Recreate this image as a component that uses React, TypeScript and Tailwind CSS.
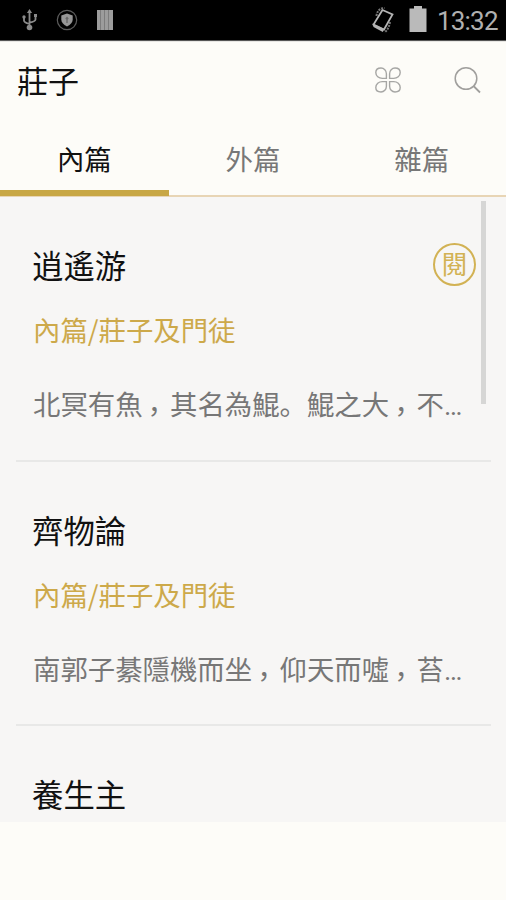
import React from 'react';

interface Chapter {
  title: string;
  source?: string;
  excerpt?: string;
  reading?: boolean;
}

const tabs = ['內篇', '外篇', '雜篇'];

const chapters: Chapter[] = [
  { title: '逍遙游', source: '內篇/莊子及門徒', excerpt: '北冥有魚，其名為鯤。鯤之大，不…', reading: true },
  { title: '齊物論', source: '內篇/莊子及門徒', excerpt: '南郭子綦隱機而坐，仰天而噓，苔…' },
  { title: '養生主' },
];

const StatusBar: React.FC = () => (
  <div className="h-[41px] bg-black border-b border-[#555] flex items-center justify-between pl-[22px] pr-2 shrink-0">
    <div className="flex items-center">
      {/* USB */}
      <svg className="w-4 h-[22px]" viewBox="0 0 16 22" fill="none" stroke="#8a8a8a" strokeWidth="1.8">
        <path d="M7.5 3v14M2 8.5v3q0 2 5.5 3.5M13.5 7v3.5q0 2-6 3" />
        <path d="M7.5 0l2.6 4H4.9z" fill="#8a8a8a" stroke="none" />
        <circle cx="7.5" cy="18.5" r="2.8" fill="#8a8a8a" stroke="none" />
        <circle cx="2" cy="8" r="1.7" fill="#8a8a8a" stroke="none" />
        <path d="M12 5h3v3h-3z" fill="#8a8a8a" stroke="none" />
      </svg>
      {/* Shield */}
      <svg className="w-[22px] h-[22px] ml-[18px]" viewBox="0 0 22 22" fill="none">
        <circle cx="11" cy="11" r="9.7" stroke="#5c5c5c" strokeWidth="1.2" />
        <path d="M11 4.500l5.700 2v4q0 4-5.700 7-5.700-3-5.700-7v-4z" fill="#969696" />
        <path d="M11 7.500l1.700 2-1 1v3.500h-1.400v-3.500l-1-1z" fill="#666" />
      </svg>
      {/* Bars */}
      <svg className="w-4 h-5 ml-[19px]" viewBox="0 0 16 20">
        <path d="M0 0h16v20H0z" fill="#9c9c9c" />
        <path d="M3.500 0v20M7.500 0v20M11.500 0v20" stroke="#7c7c7c" strokeWidth="1" />
      </svg>
    </div>
    <div className="flex items-center">
      {/* Rotating phone */}
      <svg className="w-6 h-[28px]" viewBox="0 0 24 28" fill="none">
        <path d="M11.500 4l10 4.500-8.500 15-10.500-5z" stroke="#b4b4b4" strokeWidth="1.800" />
        <path d="M1.500 17.500l11.800 5.500-1.500 3L2.500 21z" fill="#b4b4b4" />
        <path d="M5.500 10q.5-5.500 5-7.500l3-.5M19 16q-1 7-5.500 10.500" stroke="#777" strokeWidth="2" strokeDasharray="2 1" />
      </svg>
      <svg className="w-[18px] h-[26px] ml-[14px] -mt-0.5" viewBox="0 0 18 26">
        <path d="M5 0h8v2.500h4.500V26H.5V2.500H5z" fill="#bababa" />
      </svg>
      <span className="ml-[10px] font-[Roboto] text-[26px] leading-none text-[#b0b0b0] w-[61px] whitespace-nowrap mt-0.5 tracking-[-0.8px]">13:32</span>
    </div>
  </div>
);

const Header: React.FC = () => (
  <header className="h-[82px] flex items-center justify-between pl-[17px] pr-6 pb-[5px] shrink-0 border-t border-[#e8e7e4]">
    <h1 className="text-[31px] leading-none text-[#111] -mt-px">莊子</h1>
    <div className="flex items-center gap-[52px]">
      <svg className="w-7 h-7" viewBox="0 0 28 28" fill="none" stroke="#a6a6a4" strokeWidth="1.400">
        <path d="M12.400 12.400V7.700C12.400 4.500 10 2 7 2 3.800 2 1.800 3.800 1.800 6.500c0 3.500 3 5.900 6.500 5.900z" />
        <path d="M15.600 12.400V7.700C15.600 4.500 18 2 21 2c3.200 0 5.200 1.800 5.200 4.500 0 3.500-3 5.900-6.500 5.900z" />
        <path d="M12.400 15.600v4.700c0 3.200-2.400 5.700-5.400 5.700-3.200 0-5.200-1.800-5.200-4.500 0-3.500 3-5.900 6.500-5.900z" />
        <path d="M15.600 15.600v4.700c0 3.200 2.400 5.700 5.400 5.700 3.200 0 5.200-1.800 5.200-4.500 0-3.500-3-5.900-6.500-5.900z" />
      </svg>
      <svg className="w-7 h-7" viewBox="0 0 28 28" fill="none" stroke="#a09f9d" strokeWidth="1.500">
        <circle cx="12" cy="12.500" r="10.800" />
        <path d="M19.500 20l6.500 6.500" strokeWidth="1.800" />
      </svg>
    </div>
  </header>
);

const TabBar: React.FC = () => (
  <nav className="h-[74px] grid grid-cols-3 shrink-0 border-b-2 border-[#e8d5b5]">
    {tabs.map((tab, i) => (
      <button
        key={tab}
        className={
          i === 0
            ? 'text-[27.4px] leading-none text-[#111] border-b-[6px] border-[#c8a745] pt-1 h-[73px]'
            : 'text-[27.4px] leading-none text-[#777] border-b-[6px] border-transparent pt-1 h-[73px]'
        }
      >
        {tab}
      </button>
    ))}
  </nav>
);

// Commas sit low in the middle of their full-width cell
const Excerpt: React.FC<{ text: string }> = ({ text }) => (
  <p className="mt-[46px] text-[27.4px] leading-7 text-[#777] whitespace-nowrap">
    {text.split(/([，…])/).map((part, i) => {
      if (part === '，') {
        return <span key={i} className="relative top-[7px] -left-0.5 font-['Noto_Sans_CJK_TC',sans-serif]">，</span>;
      }
      if (part === '…') {
        return <span key={i} className="font-[Roboto]">…</span>;
      }
      return part;
    })}
  </p>
);

const ChapterItem: React.FC<{ chapter: Chapter }> = ({ chapter }) => (
  <article className="h-[264.5px] ml-4 mr-[15px] pl-[17px] pt-[52px] border-b-2 border-[#e8e8e7] shrink-0">
    <div className="flex items-center justify-between h-8 pr-[15px]">
      <h2 className="text-[31.4px] leading-none text-[#111] -ml-px">{chapter.title}</h2>
      {chapter.reading && (
        <span className="w-[43px] h-[43px] -mt-0.5 shrink-0 rounded-full border-2 border-[#d2b254] text-[#d2b254] text-[26px] leading-none pb-0.5 flex items-center justify-center">
          閱
        </span>
      )}
    </div>
    {chapter.source && <p className="mt-[34px] text-[27.4px] leading-7 text-[#cda94a]">{chapter.source}</p>}
    {chapter.excerpt && <Excerpt text={chapter.excerpt} />}
  </article>
);

const App: React.FC = () => (
  <div className="w-[506px] h-[900px] bg-[#fdfcf8] flex flex-col overflow-hidden font-['Noto_Sans_CJK_SC',sans-serif]">
    <StatusBar />
    <Header />
    <TabBar />
    <main className="relative h-[625px] bg-[#f7f6f5] flex flex-col overflow-hidden shrink-0">
      {chapters.map((chapter) => (
        <ChapterItem key={chapter.title} chapter={chapter} />
      ))}
      {/* Scroll indicator */}
      <div className="absolute right-[20px] top-1 w-[5px] h-[203px] bg-[#d6d6d5]" />
    </main>
  </div>
);

export default App;
